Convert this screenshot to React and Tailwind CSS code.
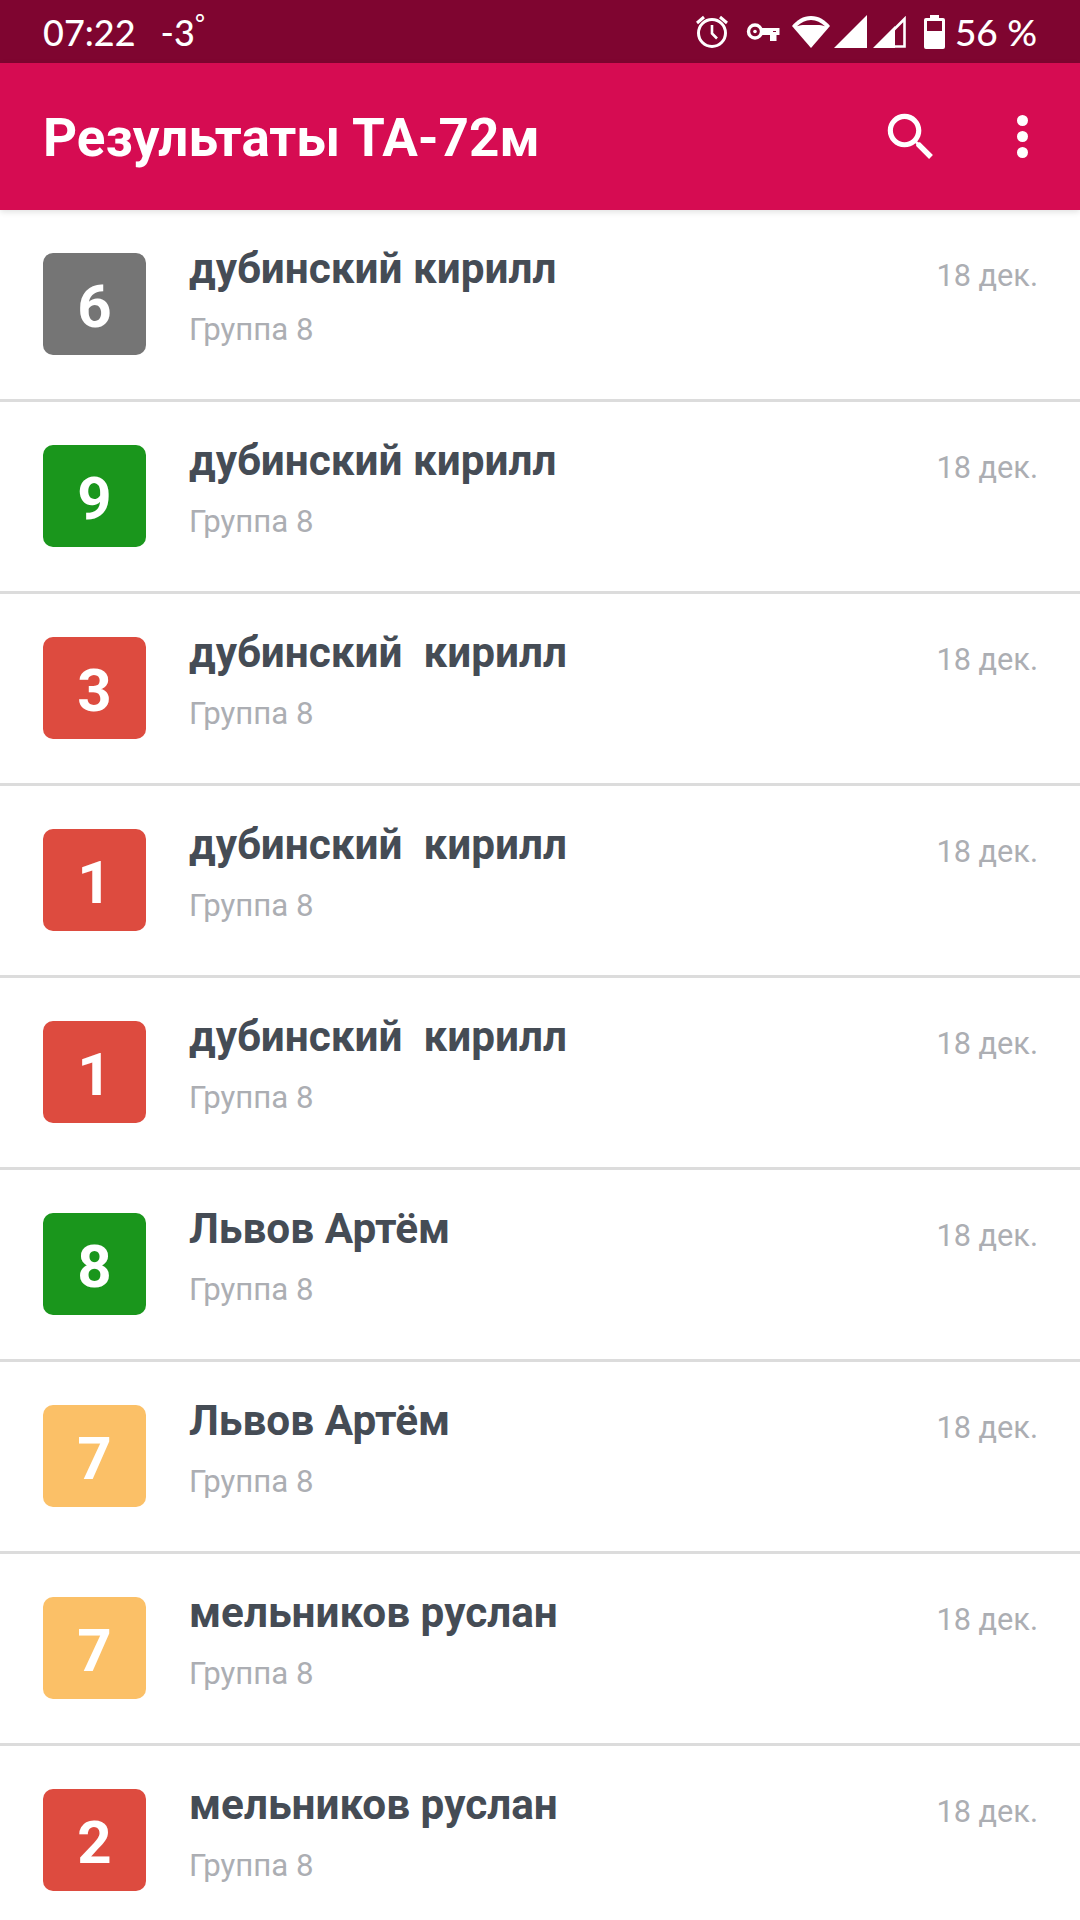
const rows = [
  { score: 6, color: 'bg-[#757575]', name: 'дубинский кирилл' },
  { score: 9, color: 'bg-[#1a961c]', name: 'дубинский кирилл' },
  { score: 3, color: 'bg-[#dd4b3f]', name: 'дубинский  кирилл' },
  { score: 1, color: 'bg-[#dd4b3f]', name: 'дубинский  кирилл' },
  { score: 1, color: 'bg-[#dd4b3f]', name: 'дубинский  кирилл' },
  { score: 8, color: 'bg-[#1a961c]', name: 'Львов Артём' },
  { score: 7, color: 'bg-[#fbc067]', name: 'Львов Артём' },
  { score: 7, color: 'bg-[#fbc067]', name: 'мельников руслан' },
  { score: 2, color: 'bg-[#dd4b3f]', name: 'мельников руслан' },
];

function StatusIcons() {
  return (
    <div className="flex items-center">
      {/* alarm */}
      <svg width="34" height="34" viewBox="0 0 34 34" fill="none" stroke="white" className="mr-[17px] mt-[-2px]">
        <circle cx="17" cy="19" r="13.5" strokeWidth="3" />
        <path d="M17 11v8.5l5 5" strokeWidth="2.6" />
        <path d="M2 9l7-6M32 9l-7-6" strokeWidth="3" />
      </svg>
      {/* vpn key */}
      <svg width="34" height="20" viewBox="0 0 34 20" fill="none" className="mr-[11px]">
        <circle cx="9" cy="9.5" r="6.5" stroke="white" strokeWidth="3.4" />
        <circle cx="9" cy="9.5" r="1.8" fill="white" />
        <path d="M15 6h18.5v7h-3v6h-6.5v-6H15z" fill="white" />
        <rect x="27" y="9" width="3" height="1" fill="#7f0530" />
      </svg>
      {/* wifi */}
      <svg width="40" height="34" viewBox="0 0 40 34" fill="none" className="mr-[3px]">
        <path d="M20 33L1 11C6 5 12 1 20 1s14 4 19 10z" fill="white" />
        <path d="M6 11.2C10 7.6 14.6 5 20 5s10 2.600 14 6.200C30 9.400 25.500 10 20 10S10 9.400 6 11.200z" fill="#7f0530" />
      </svg>
      {/* signal full */}
      <svg width="33" height="33" viewBox="0 0 33 33" className="mr-[6px]">
        <path d="M0 33L33 0v33z" fill="white" />
      </svg>
      {/* signal partial */}
      <svg width="33" height="33" viewBox="0 0 33 33" fill="none" className="mr-[18px]">
        <path d="M4 31.500L31.500 4v27.500z" stroke="white" strokeWidth="2.600" />
        <path d="M0 33L22 11v22z" fill="white" />
      </svg>
      {/* battery */}
      <svg width="21" height="34" viewBox="0 0 21 34" className="mr-[10px]">
        <path d="M6 0h9v3h4a2 2 0 0 1 2 2v27a2 2 0 0 1-2 2H2a2 2 0 0 1-2-2V5a2 2 0 0 1 2-2h4z" fill="white" />
        <rect x="3" y="6" width="15" height="10" fill="#7f0530" />
      </svg>
      <span className="whitespace-pre font-[Lato,sans-serif] text-[37px] font-medium leading-none text-white">56 %</span>
    </div>
  );
}

function Row({ score, color, name }) {
  return (
    <div className="flex h-[192px] items-start border-b-[3px] border-[#dcdcdc] pl-[43px] pr-[42px] pt-[43px]">
      <div className={`flex h-[102px] w-[103px] shrink-0 items-center justify-center rounded-[10px] ${color} pt-[6px] text-[60px] font-bold text-white`}>
        {score}
      </div>
      <div className="ml-[43px] flex-1">
        <div className="mt-[-7px] whitespace-pre text-[42.3px] font-bold leading-[46px] text-[#454c55]">{name}</div>
        <div className="mt-[20px] text-[31.2px] leading-[36px] text-[#acaeb3]">Группа 8</div>
      </div>
      <div className="mt-[5px] text-[30.7px] leading-[36px] text-[#acaeb3]">18 дек.</div>
    </div>
  );
}

export default function App() {
  return (
    <div className="h-[1920px] w-[1080px] overflow-hidden bg-white font-['Roboto',sans-serif]">
      <div className="flex h-[63px] items-center justify-between bg-[#7f0530] px-[43px]">
        <div className="flex items-center gap-[25px] font-[Lato,sans-serif] text-[36px] font-medium leading-none text-white">
          <span>07:22</span>
          <span className="flex items-start">
            -3<span className="text-[24px] leading-[18px]">°</span>
          </span>
        </div>
        <StatusIcons />
      </div>
      <div className="relative z-10 flex h-[147px] items-center justify-between bg-[#d60c52] pl-[43px] pr-[52px] shadow-[0_2px_6px_rgba(0,0,0,0.12)]">
        <div className="pt-[3px] text-[53px] font-bold leading-none text-white">Результаты ТА-72м</div>
        <div className="flex items-center gap-[75px]">
          <svg width="62" height="62" viewBox="0 0 24 24" fill="white">
            <path d="M15.5 14h-.79l-.28-.27C15.41 12.59 16 11.11 16 9.5 16 5.910 13.090 3 9.500 3S3 5.910 3 9.500 5.910 16 9.500 16c1.610 0 3.090-.590 4.230-1.570l.270.280v.790l5 4.990L20.490 19l-4.990-5zm-6 0C7.010 14 5 11.990 5 9.500S7.010 5 9.500 5 14 7.010 14 9.500 11.990 14 9.500 14z" />
          </svg>
          <div className="flex flex-col gap-[5px]">
            <div className="h-[11px] w-[11px] rounded-full bg-white" />
            <div className="h-[11px] w-[11px] rounded-full bg-white" />
            <div className="h-[11px] w-[11px] rounded-full bg-white" />
          </div>
        </div>
      </div>
      {rows.map((r, i) => (
        <Row key={i} {...r} />
      ))}
    </div>
  );
}
